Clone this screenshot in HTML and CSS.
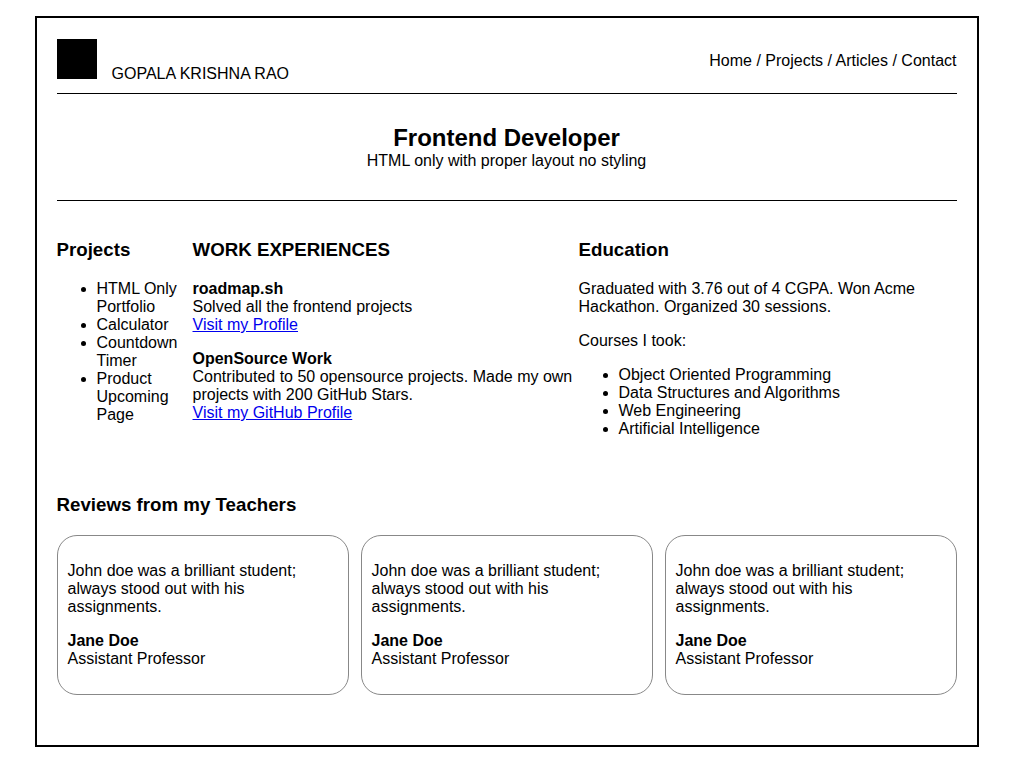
FILE: index.html
```html
<!DOCTYPE html>
<html lang="en">
<head>
<meta charset="utf-8">
<title>Gopala Krishna Rao</title>
<link rel="stylesheet" href="styles.css">
</head>
<body>
<div class="page">
  <header class="site-header">
    <div class="brand">
      <div class="logo"></div>
      <span class="brand-name">GOPALA KRISHNA RAO</span>
    </div>
    <nav class="nav">Home / Projects / Articles / Contact</nav>
  </header>

  <section class="hero">
    <h2 class="hero-title">Frontend Developer</h2>
    <p class="hero-sub">HTML only with proper layout no styling</p>
  </section>

  <section class="columns">
    <div class="col">
      <h3 class="col-title">Projects</h3>
      <ul class="list">
        <li>HTML Only Portfolio</li>
        <li>Calculator</li>
        <li>Countdown Timer</li>
        <li>Product Upcoming Page</li>
      </ul>
    </div>
    <div class="col">
      <h3 class="col-title">WORK EXPERIENCES</h3>
      <p class="para"><strong>roadmap.sh</strong><br>Solved all the frontend projects<br><a href="#" class="link">Visit my Profile</a></p>
      <p class="para"><strong>OpenSource Work</strong><br>Contributed to 50 opensource projects. Made my own projects with 200 GitHub Stars.<br><a href="#" class="link">Visit my GitHub Profile</a></p>
    </div>
    <div class="col">
      <h3 class="col-title">Education</h3>
      <p class="para">Graduated with 3.76 out of 4 CGPA. Won Acme Hackathon. Organized 30 sessions.</p>
      <p class="para">Courses I took:</p>
      <ul class="list">
        <li>Object Oriented Programming</li>
        <li>Data Structures and Algorithms</li>
        <li>Web Engineering</li>
        <li>Artificial Intelligence</li>
      </ul>
    </div>
  </section>

  <section class="reviews">
    <h3 class="col-title">Reviews from my Teachers</h3>
    <div class="cards">
      <div class="card">
        <p class="para">John doe was a brilliant student; always stood out with his assignments.</p>
        <p class="para"><strong>Jane Doe</strong><br>Assistant Professor</p>
      </div>
      <div class="card">
        <p class="para">John doe was a brilliant student; always stood out with his assignments.</p>
        <p class="para"><strong>Jane Doe</strong><br>Assistant Professor</p>
      </div>
      <div class="card">
        <p class="para">John doe was a brilliant student; always stood out with his assignments.</p>
        <p class="para"><strong>Jane Doe</strong><br>Assistant Professor</p>
      </div>
    </div>
  </section>
</div>
</body>
</html>
```

FILE: styles.css
```css
html, body {
  margin: 0;
  padding: 0;
  background: #fff;
}
body {
  font-family: "Liberation Sans", Arial, sans-serif;
  font-size: 16px;
  line-height: 18px;
  color: #000;
}
.page {
  width: 900px;
  margin: 16px auto 0;
  padding: 21px 20px 50px;
  border: 2px solid #000;
}
.site-header {
  display: flex;
  justify-content: space-between;
  align-items: center;
  padding-bottom: 10px;
  border-bottom: 1px solid #000;
}
.brand {
  display: flex;
  align-items: baseline;
  gap: 15px;
}
.logo {
  width: 40px;
  height: 40px;
  background: #000;
}
.brand-name {
  line-height: 18px;
}
.hero {
  padding: 30px 0 30px;
  border-bottom: 1px solid #000;
  text-align: center;
}
.hero-title {
  margin: 0;
  font-size: 24px;
  line-height: 28px;
  font-weight: bold;
}
.hero-sub {
  margin: 0;
}
.columns {
  display: grid;
  grid-template-columns: 136px 386px 378px;
  padding-top: 20px;
}
.col-title {
  font-size: 18.72px;
  line-height: 22px;
  font-weight: bold;
  margin: 18px 0 19px;
}
.para {
  margin: 16px 0;
}
.list {
  margin: 16px 0;
  padding-left: 40px;
}
.link {
  color: #0000ee;
  text-decoration: underline;
}
.reviews {
  padding-top: 22px;
}
.cards {
  display: grid;
  grid-template-columns: repeat(3, 1fr);
  gap: 12px;
}
.card {
  border: 1px solid #888;
  border-radius: 20px;
  padding: 10px;
}
```
